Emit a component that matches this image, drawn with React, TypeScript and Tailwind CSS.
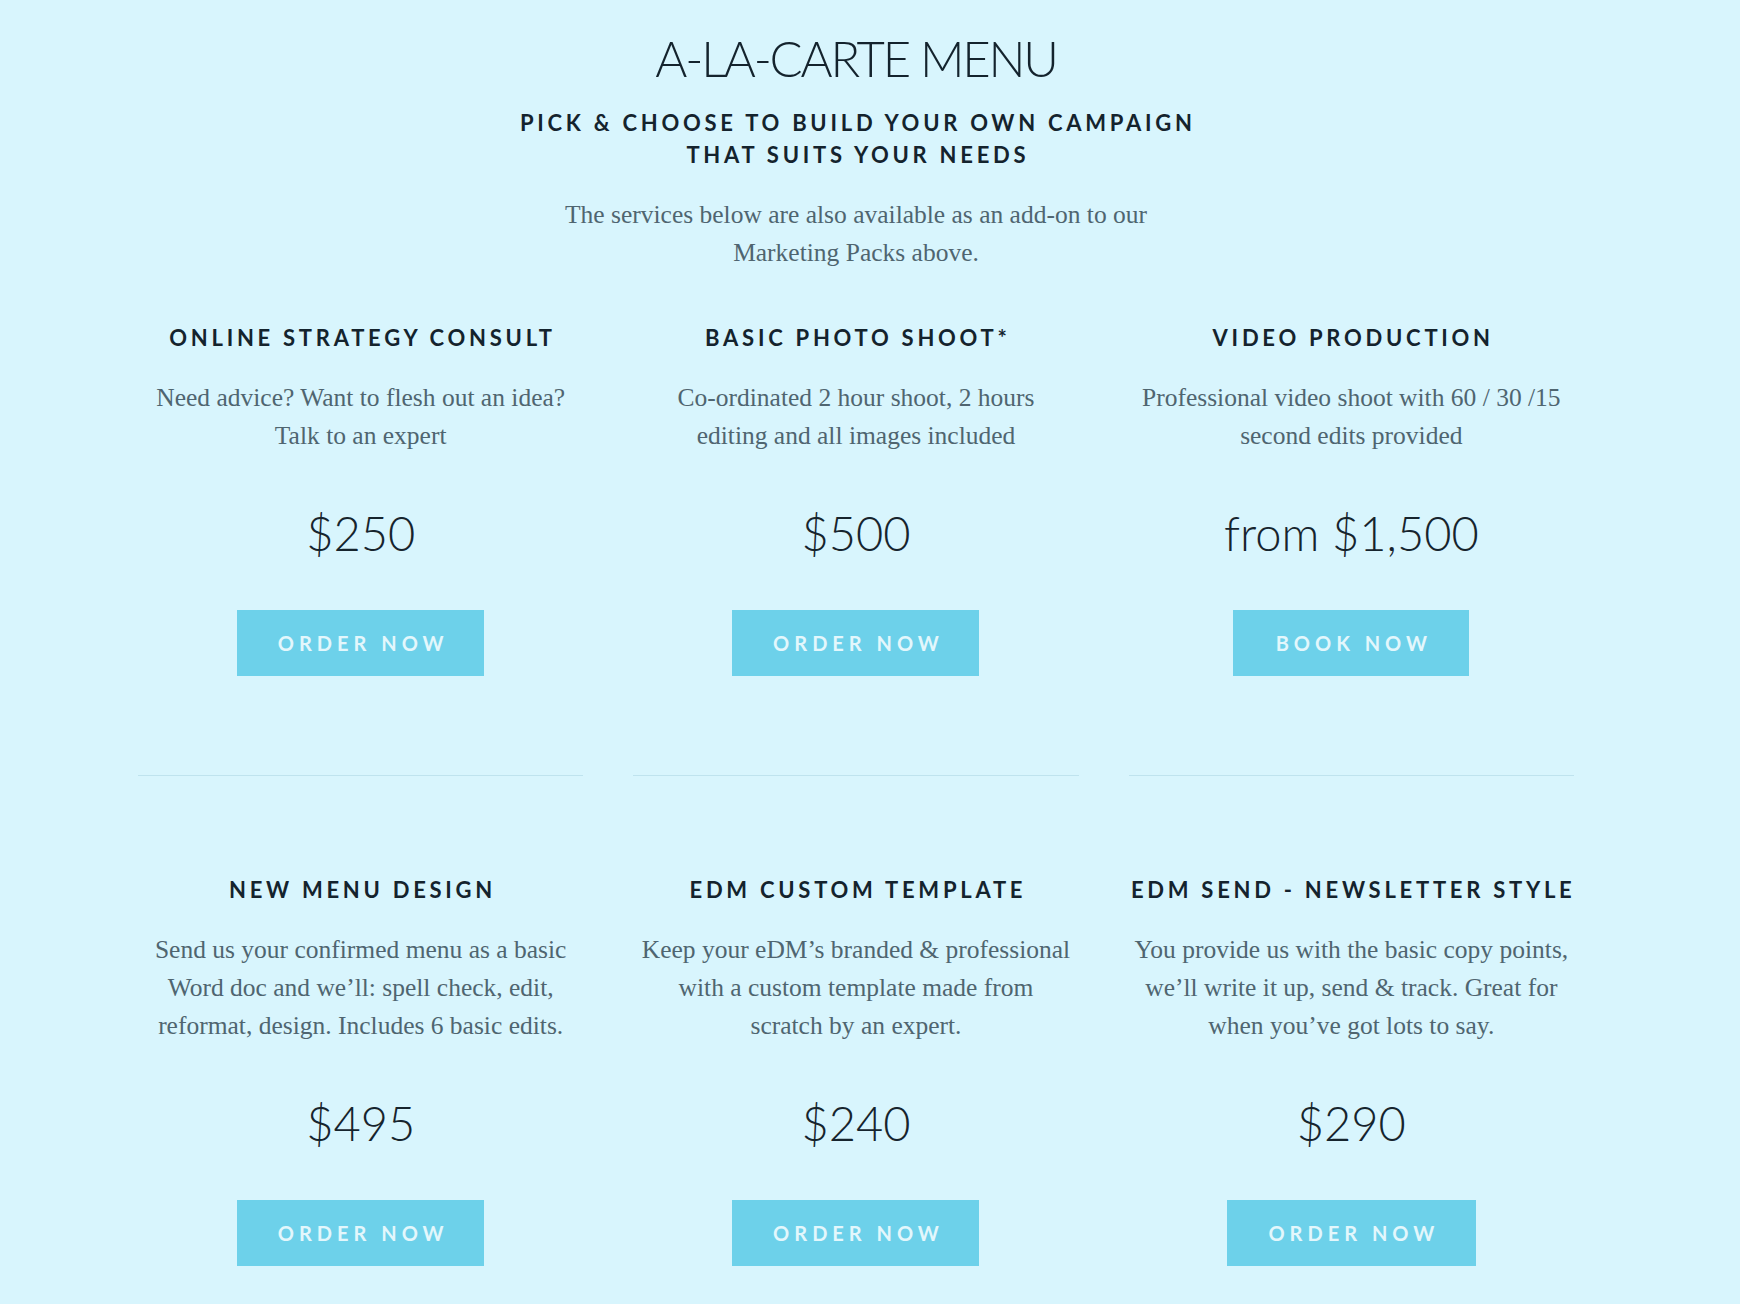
const items = [
  {
    title: "ONLINE STRATEGY CONSULT",
    lines: ["Need advice? Want to flesh out an idea?", "Talk to an expert"],
    price: "$250",
    cta: "ORDER NOW",
    btn: "w-[247px]",
  },
  {
    title: "BASIC PHOTO SHOOT*",
    lines: ["Co-ordinated 2 hour shoot, 2 hours", "editing and all images included"],
    price: "$500",
    cta: "ORDER NOW",
    btn: "w-[247px]",
  },
  {
    title: "VIDEO PRODUCTION",
    lines: ["Professional video shoot with 60 / 30 /15", "second edits provided"],
    price: "from $1,500",
    cta: "BOOK NOW",
    btn: "w-[236px]",
  },
  {
    title: "NEW MENU DESIGN",
    lines: [
      "Send us your confirmed menu as a basic",
      "Word doc and we\u2019ll: spell check, edit,",
      "reformat, design. Includes 6 basic edits.",
    ],
    price: "$495",
    cta: "ORDER NOW",
    btn: "w-[247px]",
  },
  {
    title: "EDM CUSTOM TEMPLATE",
    lines: [
      "Keep your eDM\u2019s branded & professional",
      "with a custom template made from",
      "scratch by an expert.",
    ],
    price: "$240",
    cta: "ORDER NOW",
    btn: "w-[247px]",
  },
  {
    title: "EDM SEND - NEWSLETTER STYLE",
    lines: [
      "You provide us with the basic copy points,",
      "we\u2019ll write it up, send & track. Great for",
      "when you\u2019ve got lots to say.",
    ],
    price: "$290",
    cta: "ORDER NOW",
    btn: "w-[249px]",
  },
];

type Item = (typeof items)[number];

function MenuCard({ item }: { item: Item }) {
  return (
    <div className="flex flex-col items-center text-center">
      <h3 className="whitespace-nowrap pl-[0.17em] font-['Lato',sans-serif] text-[22px] font-bold leading-[24px] tracking-[0.17em] text-[#14232d]">
        {item.title}
      </h3>
      <p className="mt-[29px] font-['Liberation_Serif',serif] text-[25.5px] leading-[38px] text-[#4f6570]">
        {item.lines.map((line) => (
          <span key={line} className="block whitespace-nowrap">
            {line}
          </span>
        ))}
      </p>
      <div className="mt-[48px] font-['Lato',sans-serif] text-[47px] font-light leading-[60px] text-[#16242d]">
        {item.price}
      </div>
      <a
        href="#"
        className={`mt-[47px] flex h-[66px] ${item.btn} items-center justify-center bg-[#6dd1ea] pl-[0.25em] font-['Lato',sans-serif] text-[20px] font-bold tracking-[0.25em] text-[#e3f7fc]`}
      >
        {item.cta}
      </a>
    </div>
  );
}

export default function App() {
  return (
    <div className="min-h-screen bg-[#d8f5fd] pr-[28px]">
      <div className="mx-auto w-[1436px] pb-[38px] pt-[28px]">
        <header className="flex flex-col items-center text-center">
          <h1 className="font-['Lato',sans-serif] text-[49px] font-light leading-[60px] tracking-[-0.045em] text-[#14232d]">
            A-LA-CARTE MENU
          </h1>
          <h2 className="mt-[19px] pl-[0.17em] font-['Lato',sans-serif] text-[22px] font-bold leading-[32px] tracking-[0.17em] text-[#14232d]">
            PICK &amp; CHOOSE TO BUILD YOUR OWN CAMPAIGN
            <br />
            THAT SUITS YOUR NEEDS
          </h2>
          <p className="mt-[25px] font-['Liberation_Serif',serif] text-[25.5px] leading-[38px] text-[#4f6570]">
            The services below are also available as an add-on to our
            <br />
            Marketing Packs above.
          </p>
        </header>

        <div className="mt-[54px] grid grid-cols-3 gap-x-[50px]">
          {items.slice(0, 3).map((item) => (
            <MenuCard key={item.title} item={item} />
          ))}
        </div>

        <div className="mt-[99px] grid grid-cols-3 gap-x-[50px]">
          <div className="h-px bg-[#bfe3ee]" />
          <div className="h-px bg-[#bfe3ee]" />
          <div className="h-px bg-[#bfe3ee]" />
        </div>

        <div className="mt-[102px] grid grid-cols-3 gap-x-[50px]">
          {items.slice(3).map((item) => (
            <MenuCard key={item.title} item={item} />
          ))}
        </div>
      </div>
    </div>
  );
}
